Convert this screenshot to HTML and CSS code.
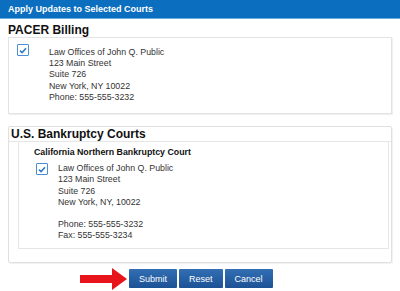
FILE: index.html
```html
<!DOCTYPE html>
<html>

<head>
  <meta charset="utf-8">
  <title>Apply Updates to Selected Courts</title>
  <meta name="viewport" content="width=device-width, initial-scale=1">

  <link rel="stylesheet" href="styles.css">

</head>

<body>

  <div class="titlebar">Apply Updates to Selected Courts</div>

  <h2 class="section-title">PACER Billing</h2>
  <div class="panel">
    <div class="entry">
      <span class="check">
        <svg width="8" height="7" viewBox="0 0 8 7"><path d="M1 3.6 L3.1 5.6 L7 1.2" fill="none" stroke="#2f78c4" stroke-width="1.5"/></svg>
      </span>
      <div class="address">
        Law Offices of John Q. Public<br>
        123 Main Street<br>
        Suite 726<br>
        New York, NY 10022<br>
        Phone: 555-555-3232
      </div>
    </div>
  </div>

  <div class="court-box">
    <h2 class="court-box-title">U.S. Bankruptcy Courts</h2>
    <div class="court-panel">
      <div class="court-name">California Northern Bankruptcy Court</div>
      <div class="entry entry-court">
        <span class="check">
          <svg width="8" height="7" viewBox="0 0 8 7"><path d="M1 3.6 L3.1 5.6 L7 1.2" fill="none" stroke="#2f78c4" stroke-width="1.5"/></svg>
        </span>
        <div class="address">
          Law Offices of John Q. Public<br>
          123 Main Street<br>
          Suite 726<br>
          New York, NY, 10022<br>
          <br>
          Phone: 555-555-3232<br>
          Fax: 555-555-3234
        </div>
      </div>
    </div>
  </div>

  <div class="actions">
    <svg class="arrow" width="47" height="22" viewBox="0 0 47 22">
      <path d="M0 7 H32 V0 L47 11 L32 22 V15 H0 Z" fill="#e8141c"/>
    </svg>
    <button class="btn">Submit</button>
    <button class="btn">Reset</button>
    <button class="btn">Cancel</button>
  </div>

</body>

</html>
```

FILE: styles.css
```css
* {
  padding: 0px;
  margin: 0px;
  box-sizing: border-box;
}

body {
  font-family: "Liberation Sans", Arial, sans-serif;
  color: #333;
  background-color: #fff;
}

.titlebar {
  height: 19px;
  background-color: #0b6ebf;
  border-bottom: 1px solid #6aaee0;
  color: #fff;
  font-size: 9px;
  font-weight: bold;
  line-height: 18px;
  padding-left: 8px;
}

.section-title {
  font-size: 12px;
  line-height: 14px;
  color: #111;
  margin: 4px 0 0 8px;
}

.panel {
  width: 384px;
  margin-left: 8px;
  border: 1px solid #e3e3e3;
  box-shadow: 1px 1px 1px rgba(0, 0, 0, 0.06);
  padding: 6px 0 10px 8px;
}

.entry {
  display: flex;
  align-items: flex-start;
}

.check {
  width: 12px;
  height: 12px;
  border: 1px solid #4a8fd6;
  border-radius: 1px;
  background-color: #fff;
  display: flex;
  align-items: center;
  justify-content: center;
  margin-right: 20px;
}

.address {
  font-size: 8.8px;
  line-height: 11.2px;
  margin-top: 3px;
}

.court-box {
  width: 384px;
  margin: 12px 0 0 8px;
  border: 1px solid #e0e0e0;
  border-radius: 2px;
  box-shadow: 1px 1px 1px rgba(0, 0, 0, 0.06);
  padding-bottom: 13px;
}

.court-box-title {
  font-size: 12px;
  line-height: 14px;
  color: #111;
  padding-left: 2px;
  border-bottom: 1px solid #e6e6e6;
}

.court-panel {
  margin: 0 2px 0 9px;
  border: 1px solid #e6e6e6;
  border-top: none;
  padding: 5px 0 6px 15px;
}

.court-name {
  font-size: 8.8px;
  font-weight: bold;
  line-height: 11.2px;
  color: #111;
  margin-bottom: 5px;
}

.entry-court {
  padding-left: 2px;
}

.entry-court .check {
  margin-right: 10px;
}

.entry-court .address {
  margin-top: 0px;
}

.actions {
  display: flex;
  align-items: center;
  gap: 2px;
  padding: 5px 0 0 80px;
}

.btn {
  height: 19px;
  padding: 0 10px;
  border: none;
  border-radius: 1px;
  background: linear-gradient(#336fb3, #1b5295);
  color: #fff;
  font-family: "Liberation Sans", Arial, sans-serif;
  font-size: 9px;
  cursor: pointer;
}
```
